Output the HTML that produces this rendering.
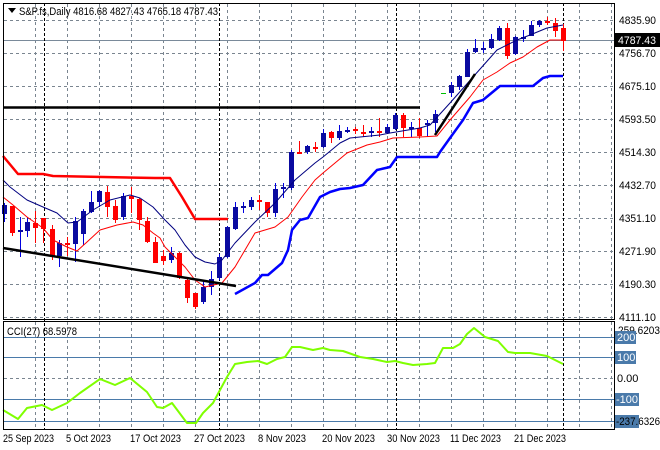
<!DOCTYPE html>
<html><head><meta charset="utf-8"><style>
html,body{margin:0;padding:0;background:#fff;width:660px;height:450px;overflow:hidden}
svg{display:block;font-family:"Liberation Sans",sans-serif}
</style></head><body>
<svg id="s" width="660" height="450" viewBox="0 0 660 450" xmlns="http://www.w3.org/2000/svg">
<g id="grid" stroke="#7a8590" stroke-width="1" stroke-dasharray="3,3" fill="none"></g>
<line x1="3" y1="40.5" x2="614" y2="40.5" stroke="#7a8a9a" stroke-width="1"/>
<g stroke="#4a7aaa" stroke-width="1">
<line x1="3" y1="337.5" x2="614" y2="337.5"/><line x1="3" y1="357.5" x2="614" y2="357.5"/>
<line x1="3" y1="399.5" x2="614" y2="399.5"/><line x1="3" y1="421.5" x2="614" y2="421.5"/>
</g>
<g stroke="#000" stroke-width="1" stroke-dasharray="3,2">
<line x1="44.5" y1="3" x2="44.5" y2="429"/><line x1="219.5" y1="3" x2="219.5" y2="429"/>
<line x1="396.5" y1="3" x2="396.5" y2="429"/><line x1="563.5" y1="3" x2="563.5" y2="429"/>
</g>
<g id="c"></g>
<g fill="none" stroke-linejoin="round">
<polyline stroke="#000080" stroke-width="1" points="3,180 10,187 27,200 43,207 57,213 68,223 77,222 93,210 110,200 130,195 140,198 153,207 165,220 175,230 185,245 195,257 205,262 215,264 222,260 235,243 255,222 275,203 295,180 315,163 323,157 340,143 350,138 380,135 390,133 420,128 430,125 450,103 473,77 497,50 517,40 530,35 547,28 563,25"/>
<polyline stroke="#ff0000" stroke-width="1" points="3,197 13,205 27,217 43,228 53,240 67,247 77,251 87,242 100,230 117,225 133,222 143,225 153,233 160,238 165,247 185,267 195,280 205,287 222,283 235,267 255,233 275,227 288,217 302,197 315,180 323,173 347,153 367,145 380,142 393,138 420,137 437,136 450,120 470,97 483,80 497,72 510,63 523,57 537,47 550,40 563,40"/>
<polyline stroke="#ff0000" stroke-width="2.5" points="3,156 18,174 43,174 53,176 155,178 170,178 182,197 195,219 228,219"/>
<polyline stroke="#0000ff" stroke-width="2.5" points="235,294 255,283 262,275 268,275 282,263 288,250 292,230 300,220 308,218 320,197 330,192 340,189 350,188 363,185 377,170 390,167 397,157 437,157 440,152 450,138 463,120 473,103 483,100 500,86 533,86 543,78 550,76 563,76"/>
<line x1="3" y1="107.5" x2="420" y2="107.5" stroke="#000" stroke-width="2.5"/>
<line x1="3" y1="248" x2="236" y2="286" stroke="#000" stroke-width="2.5"/>
<line x1="435" y1="135" x2="475" y2="74" stroke="#000" stroke-width="2.5"/>
<line x1="441" y1="93.5" x2="446" y2="93.5" stroke="#00c000" stroke-width="1"/>
<polyline stroke="#7fff00" stroke-width="2" points="3,410 18,419 27,408 42,405 52,410 67,403 80,393 100,379 115,385 130,378 147,392 157,407 163,408 172,403 187,423 196,423 203,413 213,403 227,377 235,364 247,362 258,361 267,364 277,359 285,357 292,347 300,347 313,350 323,348 330,350 343,351 360,357 373,359 387,362 395,361 403,363 413,365 427,364 435,363 443,348 453,348 460,344 467,334 474,328 485,337 498,341 508,352 515,353 530,353 547,356 563,364"/>
</g>
<g fill="none" stroke="#000" stroke-width="1">
<rect x="3.5" y="3.5" width="611" height="316"/>
<rect x="3.5" y="321.5" width="611" height="108"/>
</g>
<path d="M8 8 L16 8 L12 13 Z" fill="#000"/>
<text x="19" y="15" font-size="11" fill="#000" textLength="199" lengthAdjust="spacingAndGlyphs">S&amp;P.fs,Daily  4816.68 4827.43 4765.18 4787.43</text>
<text x="7" y="335" font-size="11" fill="#000" textLength="70" lengthAdjust="spacingAndGlyphs">CCI(27) 68.5978</text>
<g font-size="11" fill="#000">
<text x="619" y="24" textLength="37" lengthAdjust="spacingAndGlyphs">4835.90</text>
<text x="619" y="57" textLength="37" lengthAdjust="spacingAndGlyphs">4756.70</text>
<text x="619" y="90" textLength="37" lengthAdjust="spacingAndGlyphs">4675.10</text>
<text x="619" y="123" textLength="37" lengthAdjust="spacingAndGlyphs">4593.50</text>
<text x="619" y="156" textLength="37" lengthAdjust="spacingAndGlyphs">4514.30</text>
<text x="619" y="189" textLength="37" lengthAdjust="spacingAndGlyphs">4432.70</text>
<text x="619" y="222" textLength="37" lengthAdjust="spacingAndGlyphs">4351.10</text>
<text x="619" y="255" textLength="37" lengthAdjust="spacingAndGlyphs">4271.90</text>
<text x="619" y="288" textLength="37" lengthAdjust="spacingAndGlyphs">4190.30</text>
<text x="619" y="321" textLength="37" lengthAdjust="spacingAndGlyphs">4111.10</text>
<text x="618" y="334" textLength="42" lengthAdjust="spacingAndGlyphs">259.6203</text>
<text x="617" y="382">0.00</text>
</g>
<rect x="615" y="33" width="45" height="14" fill="#000"/>
<text x="618" y="44" font-size="11" fill="#fff" textLength="38" lengthAdjust="spacingAndGlyphs">4787.43</text>
<g fill="#4a7aaa"><rect x="615" y="331" width="21" height="13"/><rect x="615" y="351" width="21" height="13"/><rect x="615" y="393" width="24" height="13"/><rect x="615" y="415" width="24" height="13"/></g>
<g font-size="11" fill="#fff"><text x="617" y="341">200</text><text x="617" y="361">100</text><text x="616" y="403">-100</text></g>
<text x="616" y="425" font-size="11" fill="#000" textLength="44" lengthAdjust="spacingAndGlyphs">-237.6326</text>
<g font-size="11" fill="#000" lengthAdjust="spacingAndGlyphs">
<text x="3" y="442" textLength="51" lengthAdjust="spacingAndGlyphs">25 Sep 2023</text>
<text x="66" y="442" textLength="45" lengthAdjust="spacingAndGlyphs">5 Oct 2023</text>
<text x="130" y="442" textLength="51" lengthAdjust="spacingAndGlyphs">17 Oct 2023</text>
<text x="194" y="442" textLength="51" lengthAdjust="spacingAndGlyphs">27 Oct 2023</text>
<text x="258" y="442" textLength="48" lengthAdjust="spacingAndGlyphs">8 Nov 2023</text>
<text x="322" y="442" textLength="53" lengthAdjust="spacingAndGlyphs">20 Nov 2023</text>
<text x="387" y="442" textLength="53" lengthAdjust="spacingAndGlyphs">30 Nov 2023</text>
<text x="450" y="442" textLength="51" lengthAdjust="spacingAndGlyphs">11 Dec 2023</text>
<text x="514" y="442" textLength="52" lengthAdjust="spacingAndGlyphs">21 Dec 2023</text>
</g>
</svg>
<script>
var g=document.getElementById("grid"),h="";
[20,53,86,119,152,185,218,251,284,317,378].forEach(function(y){h+='<line x1="4" y1="'+(y+.5)+'" x2="614" y2="'+(y+.5)+'"/>';});
for(var x=35;x<614;x+=32){h+='<line x1="'+(x+.5)+'" y1="4" x2="'+(x+.5)+'" y2="319"/><line x1="'+(x+.5)+'" y1="322" x2="'+(x+.5)+'" y2="429"/>';}
g.innerHTML=h;
var C=[
[4,"b",203,205,214,222],[12,"r",206,206,233,236],[20,"b",217,230,232,257],[27,"b",217,222,231,237],[35,"r",211,223,228,243],
[43,"r",218,218,229,243],[52,"r",225,229,256,260],[59,"b",240,243,256,267],[67,"r",237,243,245,256],[75,"b",217,221,244,262],
[83,"b",209,211,234,245],[91,"b",191,202,212,213],[99,"b",190,191,202,207],[107,"r",186,192,207,217],[115,"r",200,206,220,223],
[123,"b",193,196,217,220],[131,"r",187,196,199,213],[139,"r",198,199,220,230],[147,"r",217,221,242,243],[155,"r",237,242,263,263],
[163,"r",250,256,261,265],[171,"b",247,253,260,263],[179,"r",252,253,278,279],[187,"r",279,280,298,303],[195,"r",293,293,307,309],
[203,"b",282,287,302,304],[211,"b",271,279,287,295],[219,"b",254,257,278,280],[227,"b",226,227,257,258],[235,"b",202,207,229,230],
[243,"b",202,206,208,213],[251,"b",197,200,207,210],[259,"r",195,200,202,210],[267,"r",202,202,213,217],[275,"b",183,189,213,217],
[283,"b",183,187,189,198],[291,"b",150,152,188,190],[299,"r",141,152,154,153],[307,"b",145,146,152,154],[315,"r",142,147,149,152],
[323,"b",129,133,147,148],[331,"r",131,132,138,143],[339,"b",125,131,138,140],[347,"b",127,130,132,133],[355,"r",127,129,131,134],
[363,"r",125,132,134,137],[371,"b",127,131,133,137],[379,"r",118,131,133,137],[387,"b",124,127,133,134],[395,"b",113,115,129,130],
[403,"r",113,115,128,137],[411,"b",122,127,129,137],[419,"r",118,128,136,138],[427,"b",120,123,125,137],[435,"b",110,114,123,132],
[451,"b",82,85,93,97],[459,"b",75,76,87,90],[467,"b",49,52,77,77],[475,"b",39,48,52,53],[483,"b",42,48,50,53],
[491,"b",34,39,48,49],[499,"b",26,28,40,41],[507,"r",23,28,56,59],[515,"b",36,37,54,55],[523,"b",30,37,39,42],
[531,"b",21,25,36,36],[539,"b",20,21,25,27],[547,"r",17,21,23,25],[555,"r",18,23,31,37],[563,"r",24,28,41,51]];
var s="";
C.forEach(function(c){var x=c[0],col=c[1]=="b"?"#0000e0":"#ff0000",fill=c[1]=="b"?"#0a0aa0":"#ff0000";
var bt=c[3],bb=Math.max(c[4],c[3]+2);
s+='<line x1="'+(x+.5)+'" y1="'+c[2]+'" x2="'+(x+.5)+'" y2="'+c[5]+'" stroke="'+col+'" stroke-width="1"/>';
s+='<rect x="'+(x-2)+'" y="'+bt+'" width="5" height="'+(bb-bt)+'" fill="'+fill+'"/>';});
document.getElementById("c").innerHTML=s;
</script>
</body></html>
